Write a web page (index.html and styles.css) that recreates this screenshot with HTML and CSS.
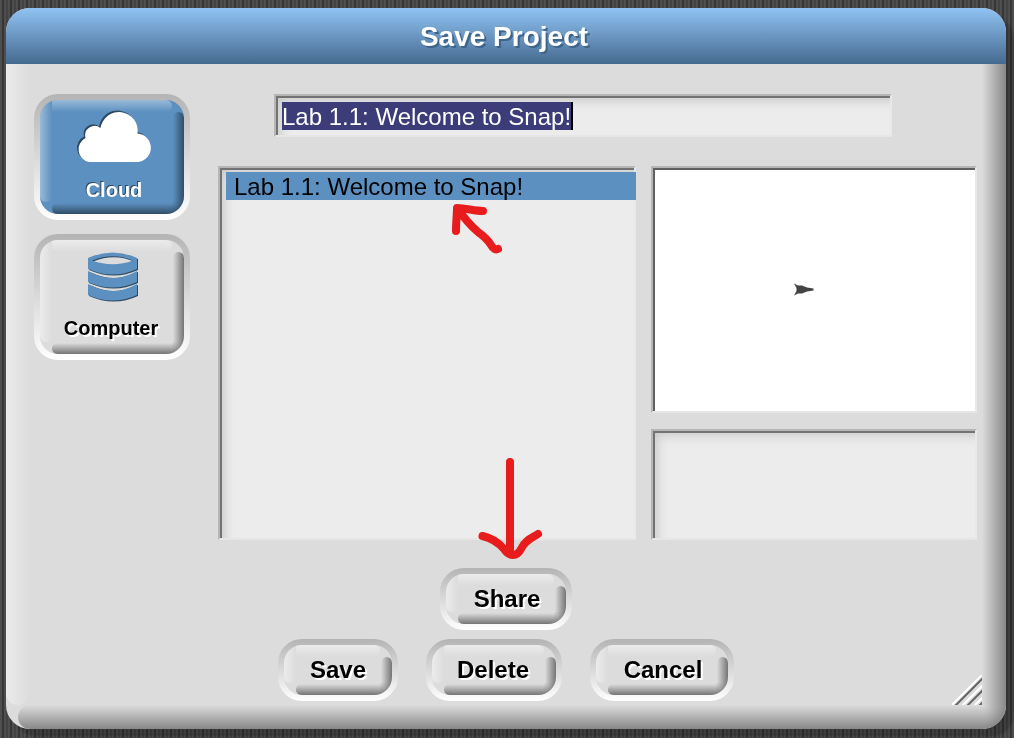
FILE: index.html
```
<!DOCTYPE html>
<html lang="en">
<head>
<meta charset="utf-8">
<title>Save Project</title>
<link rel="stylesheet" href="styles.css">
</head>
<body>
<main class="dialog">
  <header class="titlebar">Save Project</header>
  <div class="edge edge-left"></div>
  <div class="edge edge-bottom"></div>
  <div class="edge edge-right"></div>
  <div class="edge edge-corner"></div>

  <div class="body">
    <nav class="sources">
      <button class="btn source selected">
        <span class="face"><i class="t"></i><i class="l"></i><i class="b"></i><i class="r"></i><i class="c"></i>
          <svg class="cloud" width="80" height="52" viewBox="0 0 80 52">
            <path class="cloud-shadow" transform="translate(-1.500 -1.500)" d="M15 51A12.800 12.800 0 0 1 11.500 27A9.500 9.500 0 0 1 26.500 17A18.700 18.700 0 0 1 63.500 22.500A14.300 14.300 0 0 1 64 51Z"/>
            <path class="cloud-fill" d="M15 51A12.800 12.800 0 0 1 11.500 27A9.500 9.500 0 0 1 26.500 17A18.700 18.700 0 0 1 63.500 22.500A14.300 14.300 0 0 1 64 51Z"/>
          </svg>
          <span class="label">Cloud</span>
        </span>
      </button>
      <button class="btn source">
        <span class="face"><i class="t"></i><i class="l"></i><i class="b"></i><i class="r"></i><i class="c"></i>
          <svg class="disks" width="52" height="52" viewBox="0 0 52 52">
            <g class="disk-shadow" transform="translate(1 1)">
              <path d="M0 6Q25 -5 49 6V17Q25 28 0 17ZM4 8.500Q25 0 45 8.500Q25 16 4 8.500Z"/>
              <path d="M0 19L3 20Q25 30 46 20L49 19V30Q25 41 0 30Z"/>
              <path d="M0 32L3 33Q25 43 46 33L49 32V43Q25 54 0 43Z"/>
            </g>
            <g class="disk-fill">
              <path d="M0 6Q25 -5 49 6V17Q25 28 0 17ZM4 8.500Q25 0 45 8.500Q25 16 4 8.500Z"/>
              <path d="M0 19L4 21Q25 31 45 21L49 19V30Q25 41 0 30Z"/>
              <path d="M0 32L4 34Q25 44 45 34L49 32V43Q25 54 0 43Z"/>
            </g>
          </svg>
          <span class="label">Computer</span>
        </span>
      </button>
    </nav>

    <section class="content">
      <div class="field name"><span class="selection">Lab 1.1: Welcome to Snap!</span></div>
      <div class="panes">
        <div class="field list"><div class="item">Lab 1.1: Welcome to Snap!</div></div>
        <div class="side">
          <div class="field preview">
            <svg width="22" height="14" viewBox="0 0 22 14"><path class="sprite" d="M1 .5L5 2.500L9 2.500L14 4.500L20.500 5.500V7.500L14 8.500L9 10.500L5 10.500L1 12.500L3.500 8V5Z"/></svg>
          </div>
          <div class="field notes"></div>
        </div>
      </div>
    </section>
  </div>

  <div class="actions share-row">
    <button class="btn share"><span class="face"><i class="t"></i><i class="l"></i><i class="b"></i><i class="r"></i><i class="c"></i><span class="label">Share</span></span></button>
  </div>
  <div class="actions main-row">
    <button class="btn save"><span class="face"><i class="t"></i><i class="l"></i><i class="b"></i><i class="r"></i><i class="c"></i><span class="label">Save</span></span></button>
    <button class="btn delete"><span class="face"><i class="t"></i><i class="l"></i><i class="b"></i><i class="r"></i><i class="c"></i><span class="label">Delete</span></span></button>
    <button class="btn cancel"><span class="face"><i class="t"></i><i class="l"></i><i class="b"></i><i class="r"></i><i class="c"></i><span class="label">Cancel</span></span></button>
  </div>

  <svg class="grip" width="30" height="30" viewBox="0 0 30 30">
    <g class="grip-light"><path d="M-1 31L31 -1M10 31L31 10M22 31L31 22"/></g>
    <g class="grip-dark"><path d="M2 32L32 2M14 32L32 14M26 32L32 26"/></g>
  </svg>
</main>

<svg class="marks" width="1014" height="738" viewBox="0 0 1014 738">
  <path d="M456 231C456 222 457 214 457 208C466 208 474 211 483 211M458 209C464 218 471 226 478 232C485 237 488 240 491 245C493 249 496 250 498 249"/>
  <path d="M510 462V553M482.500 536C491 538 499 543 504 549C509 557 517 557 521 549C525 540 532 538 538 534"/>
</svg>
</body>
</html>
```

FILE: styles.css
```
* { box-sizing: border-box; }

body {
  margin: 0;
  width: 1014px;
  height: 738px;
  padding: 8px 8px 9px 6px;
  overflow: hidden;
  font-family: "Liberation Sans", Arial, sans-serif;
  background: repeating-linear-gradient(90deg, #4e4e4e 0 2px, #363636 2px 4px, #4e4e4e 4px 6px, #424242 6px 8px);
}

.dialog {
  position: relative;
  width: 1000px;
  height: 721px;
  overflow: hidden;
  border-radius: 24px;
  background: #dcdcdc;
  filter: drop-shadow(8px 8px 1px rgba(0, 0, 0, .2));
}

.titlebar {
  height: 56px;
  line-height: 58px;
  padding-right: 4px;
  text-align: center;
  color: #fff;
  font-size: 28px;
  font-weight: bold;
  text-shadow: 2px 2px 0 #3d648a;
  background: linear-gradient(#90c3f3, #456a90);
}

.edge { position: absolute; }
.edge-left {
  left: 0; top: 56px; width: 24px; height: 641px;
  border-radius: 0 0 12px 12px;
  background: linear-gradient(90deg, #ebebeb, #dcdcdc);
}
.edge-bottom {
  left: 12px; right: 24px; bottom: 0; height: 24px;
  border-radius: 12px 0 0 12px;
  background: linear-gradient(#dcdcdc, #888);
}
.edge-right {
  right: 0; top: 56px; bottom: 24px; width: 24px;
  background: linear-gradient(90deg, #dcdcdc, #888);
}
.edge-corner {
  right: 0; bottom: 0; width: 24px; height: 24px;
  background: radial-gradient(circle at 0 0, #dcdcdc 0, #888 24px);
}

.body { display: flex; height: 476px; padding: 30px 29px 0 28px; }

.sources { display: flex; flex-direction: column; gap: 14px; width: 184px; }

.btn {
  display: block;
  padding: 6px;
  border: 0;
  border-radius: 24px;
  font: bold 24px "Liberation Sans", Arial, sans-serif;
  color: #000;
  background: linear-gradient(#b4b4b4, #fff);
}
.face {
  position: relative;
  display: flex;
  align-items: center;
  justify-content: center;
  width: 100%;
  height: 100%;
  overflow: hidden;
  border-radius: 18px;
  background: #dcdcdc;
  --hi: rgba(255, 255, 255, .45);
  --lo: rgba(0, 0, 0, .47);
}
.face i { position: absolute; }
.t { left: 12px; right: 12px; top: 0; height: 12px; border-radius: 0 6px 6px 0; background: linear-gradient(var(--hi), transparent); }
.l { left: 0; top: 0; bottom: 12px; width: 12px; border-radius: 0 0 6px 6px; background: linear-gradient(90deg, var(--hi), transparent); }
.b { left: 12px; right: 12px; bottom: 0; height: 11px; border-radius: 6px 0 0 6px; background: linear-gradient(transparent, var(--lo)); }
.r { right: 0; top: 12px; bottom: 12px; width: 11px; border-radius: 6px 6px 0 0; background: linear-gradient(90deg, transparent, var(--lo)); }
.c { right: 0; bottom: 0; width: 12px; height: 12px; background: radial-gradient(circle at 0 0, transparent 0, var(--lo) 12px); }
.label { position: relative; line-height: 28px; text-shadow: 2px 2px 0 #fff; }

.share .label, .cancel .label { left: 1px; }
.delete .label { left: -1px; }

.source { width: 156px; height: 126px; font-size: 20px; }
.source .face { flex-direction: column; justify-content: flex-start; }
.source .label { line-height: 24px; padding-right: 2px; }
.selected .face { background: #5c90c0; --hi: rgba(255, 255, 255, .38); }
.selected .label { color: #fff; padding-right: 0; text-shadow: -1px -1px 0 #2e4860; margin-left: 4px; }
.cloud { margin: 11px 0 15px 3px; overflow: visible; }
.cloud-shadow { fill: #2e4860; }
.cloud-fill { fill: #fff; }
.disks { margin: 12px 0 12px 3px; }
.disk-shadow { fill: #2e4860; fill-rule: evenodd; }
.disk-fill { fill: #5c90c0; fill-rule: evenodd; }

.content { flex: 1; display: flex; flex-direction: column; gap: 28px; }

.field {
  border: 2px solid;
  border-color: #b6b6b6 #e9e9e9 #e6e6e6 #b6b6b6;
  background: #ececec;
  box-shadow: inset 2px 2px 0 #737373, inset 12px 12px 12px -8px #c6c6c6;
}
.name {
  width: 618px;
  height: 43px;
  margin-left: 56px;
  margin-bottom: 1px;
  padding: 6px;
}
.selection {
  display: inline-block;
  height: 28px;
  line-height: 29px;
  font-size: 24px;
  white-space: nowrap;
  color: #fff;
  background: #3c3c78;
  border-right: 2px solid #000;
}
.panes { display: flex; gap: 15px; height: 374px; }
.list { width: 418px; padding: 4px 0 0 6px; }
.item {
  height: 28px;
  margin-right: -2px;
  padding-left: 8px;
  line-height: 29px;
  font-size: 24px;
  white-space: nowrap;
  background: #5c90c0;
}
.side { display: flex; flex-direction: column; gap: 16px; width: 326px; }
.preview {
  display: flex;
  align-items: center;
  justify-content: center;
  height: 247px;
  padding-right: 21px;
  background: #fff;
  box-shadow: inset 2px 2px 0 #606060;
}
.sprite { fill: #444; }
.notes { height: 111px; }

.actions { display: flex; height: 62px; }
.share-row { margin-top: 28px; padding-left: 434px; }
.main-row { margin-top: 9px; padding-left: 272px; gap: 28px; }
.share { width: 132px; }
.save { width: 120px; }
.delete { width: 136px; }
.cancel { width: 144px; }

.grip { position: absolute; left: 946px; top: 667px; }
.grip-light { stroke: #fff; stroke-width: 2; }
.grip-dark { stroke: #666; stroke-width: 2; }

.marks { position: absolute; left: 0; top: 0; pointer-events: none; }
.marks path { fill: none; stroke: #e81c1c; stroke-width: 8; stroke-linecap: round; stroke-linejoin: round; }
```
